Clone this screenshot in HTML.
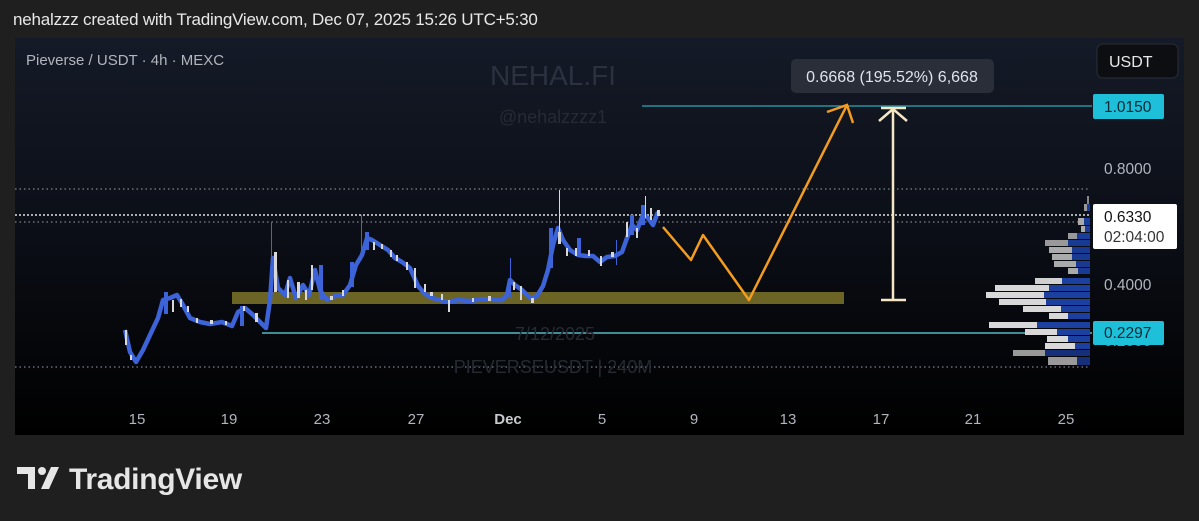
<!DOCTYPE html>
<html><head><meta charset="utf-8"><style>
html,body{margin:0;padding:0;width:1199px;height:521px;background:#1f1f1f;overflow:hidden;font-family:"Liberation Sans",sans-serif}
#hdr{position:absolute;left:13px;top:10px;font-size:17px;color:#e8e8e8;letter-spacing:-0.2px}
#chart{position:absolute;left:15px;top:38px;width:1169px;height:397px;background:linear-gradient(#141a27 0%,#0b0e16 50%,#000 100%)}
svg{position:absolute;left:0;top:0}
</style></head><body>
<div id="hdr">nehalzzz created with TradingView.com, Dec 07, 2025 15:26 UTC+5:30</div>
<div id="chart"></div>
<svg width="1199" height="521" viewBox="0 0 1199 521" font-family="Liberation Sans, sans-serif">
<text x="26" y="65" font-size="15" fill="#b2b5be">Pieverse / USDT · 4h · MEXC</text>
<text x="553" y="85" font-size="28" fill="#2c3140" text-anchor="middle">NEHAL.FI</text>
<text x="553" y="123" font-size="18" fill="#252a36" text-anchor="middle">@nehalzzzz1</text>
<g stroke="#9aa0aa" stroke-dasharray="1.5 3" stroke-width="1">
<line x1="15" y1="189" x2="1090" y2="189"/>
<line x1="15" y1="222" x2="1090" y2="222"/>
<line x1="15" y1="367" x2="1090" y2="367"/>
</g>
<line x1="15" y1="215" x2="1090" y2="215" stroke="#e0e0e0" stroke-dasharray="2 2" stroke-width="1.5"/>
<rect x="232" y="292" width="612" height="12" fill="#6b6425"/>
<line x1="642" y1="106" x2="1092" y2="106" stroke="#27a9bd" stroke-width="1.3"/>
<line x1="262" y1="333" x2="1092" y2="333" stroke="#56b8c4" stroke-width="1.5"/>
<text x="555" y="340" font-size="18" fill="#262a33" text-anchor="middle">7/12/2025</text>
<text x="553" y="373" font-size="18" fill="#262a33" text-anchor="middle">PIEVERSEUSDT | 240M</text>
<polyline fill="none" stroke="#3d63d8" stroke-width="4.5" stroke-linejoin="round" points="125,330 130,352 136,362 143,350 150,335 158,318 163,300 170,298 177,295 183,305 190,318 200,322 210,324 222,322 232,326 238,312 245,308 252,314 260,322 266,328 270,300 273,258 278,288 285,295 290,278 296,298 303,285 309,295 315,270 320,290 327,300 335,296 343,295 350,285 356,265 362,255 367,238 372,240 380,245 388,250 395,258 402,262 410,268 418,286 425,294 432,298 440,300 448,302 458,300 470,301 482,299 495,300 502,300 507,295 510,280 515,285 522,290 530,298 537,296 543,286 548,270 553,245 558,228 563,240 570,250 578,255 586,256 593,256 600,262 607,257 615,256 622,252 627,238 632,225 637,230 643,215 648,218 653,225 658,212"/>
<g fill="#3d63d8">
<rect x="271" y="222" width="1" height="80"/><rect x="164" y="292" width="4" height="22"/><rect x="319" y="265" width="4" height="35"/><rect x="361" y="215" width="1" height="45"/><rect x="365" y="232" width="4" height="18"/><rect x="549" y="228" width="4" height="40"/><rect x="510" y="258" width="1" height="40"/><rect x="616" y="240" width="1" height="25"/><rect x="630" y="215" width="4" height="20"/><rect x="641" y="205" width="4" height="20"/><rect x="240" y="306" width="4" height="20"/><rect x="577" y="238" width="4" height="18"/><rect x="350" y="262" width="4" height="25"/>
</g>
<g fill="#d8d8d8">
<rect x="125" y="330" width="2" height="15"/><rect x="130" y="355" width="2" height="5"/><rect x="172" y="300" width="2" height="12"/><rect x="180" y="299" width="2" height="8"/><rect x="187" y="306" width="2" height="6"/><rect x="196" y="318" width="2" height="5"/><rect x="210" y="320" width="3" height="4"/><rect x="225" y="321" width="2" height="4"/><rect x="243" y="306" width="2" height="5"/><rect x="255" y="313" width="3" height="9"/><rect x="274" y="252" width="3" height="40"/><rect x="287" y="280" width="2" height="18"/><rect x="297" y="282" width="3" height="16"/><rect x="305" y="290" width="2" height="10"/><rect x="311" y="265" width="2" height="25"/><rect x="330" y="296" width="3" height="4"/><rect x="342" y="290" width="2" height="6"/><rect x="373" y="242" width="2" height="8"/><rect x="381" y="244" width="2" height="5"/><rect x="390" y="250" width="2" height="7"/><rect x="396" y="255" width="2" height="6"/><rect x="406" y="262" width="2" height="8"/><rect x="414" y="268" width="2" height="20"/><rect x="424" y="284" width="2" height="8"/><rect x="430" y="292" width="3" height="4"/><rect x="441" y="294" width="2" height="6"/><rect x="448" y="300" width="2" height="12"/><rect x="472" y="298" width="2" height="4"/><rect x="488" y="296" width="3" height="5"/><rect x="513" y="282" width="2" height="8"/><rect x="520" y="286" width="2" height="14"/><rect x="531" y="298" width="3" height="5"/><rect x="559" y="190" width="1" height="45"/><rect x="558" y="232" width="3" height="12"/><rect x="566" y="248" width="2" height="8"/><rect x="575" y="248" width="2" height="8"/><rect x="588" y="250" width="2" height="6"/><rect x="600" y="256" width="2" height="10"/><rect x="611" y="252" width="3" height="5"/><rect x="626" y="222" width="2" height="15"/><rect x="636" y="228" width="2" height="10"/><rect x="645" y="196" width="1" height="22"/><rect x="650" y="208" width="2" height="12"/><rect x="657" y="210" width="3" height="6"/>
</g>
<polyline fill="none" stroke="#f39c1f" stroke-width="2.5" stroke-linejoin="round" points="663,227 691,260 703,235 749,300 847,105"/>
<polyline fill="none" stroke="#f39c1f" stroke-width="2.5" points="827,112 847,105 853,123"/>
<g stroke="#f6e7c4" stroke-width="2.5" fill="none">
<line x1="893" y1="109" x2="893" y2="300"/>
<line x1="881" y1="300" x2="906" y2="300"/>
<line x1="881" y1="108" x2="906" y2="108"/>
<polyline points="879,121 893,109 907,121"/>
</g>
<rect x="791" y="59" width="203" height="34" rx="5" fill="#2a2e39"/>
<text x="892" y="82" font-size="16" fill="#e0e3eb" text-anchor="middle">0.6668 (195.52%) 6,668</text>
<g>
<rect x="1087" y="196" width="2" height="10" fill="#888"/>
<rect x="1084" y="204" width="3" height="7" fill="#999"/><rect x="1087" y="204" width="3" height="7" fill="#1a3d9a"/>
<rect x="1078" y="218" width="6" height="7" fill="#aaa"/><rect x="1084" y="218" width="6" height="7" fill="#1a3d9a"/>
<rect x="1081" y="226" width="4" height="6" fill="#aaa"/><rect x="1085" y="226" width="5" height="6" fill="#1a3d9a"/>
<rect x="1068" y="233" width="9" height="6" fill="#999"/><rect x="1077" y="233" width="13" height="6" fill="#1a3d9a"/>
<rect x="1045" y="240" width="23" height="6" fill="#999"/><rect x="1068" y="240" width="22" height="6" fill="#183a92"/>
<rect x="1049" y="247" width="23" height="6" fill="#aaa"/><rect x="1072" y="247" width="18" height="6" fill="#183a92"/>
<rect x="1052" y="254" width="20" height="6" fill="#aaa"/><rect x="1072" y="254" width="18" height="6" fill="#183a92"/>
<rect x="1054" y="261" width="22" height="6" fill="#aaa"/><rect x="1076" y="261" width="14" height="6" fill="#183a92"/>
<rect x="1068" y="268" width="10" height="6" fill="#aaa"/><rect x="1078" y="268" width="12" height="6" fill="#183a92"/>
<rect x="1035" y="278" width="27" height="6" fill="#d0d0d0"/><rect x="1062" y="278" width="28" height="6" fill="#1c40a0"/>
<rect x="995" y="285" width="54" height="6" fill="#d8d8d8"/><rect x="1049" y="285" width="41" height="6" fill="#1c40a0"/>
<rect x="986" y="292" width="58" height="6" fill="#d8d8d8"/><rect x="1044" y="292" width="46" height="6" fill="#1c40a0"/>
<rect x="999" y="299" width="47" height="6" fill="#d8d8d8"/><rect x="1046" y="299" width="44" height="6" fill="#1c40a0"/>
<rect x="1023" y="306" width="38" height="6" fill="#d8d8d8"/><rect x="1061" y="306" width="29" height="6" fill="#1c40a0"/>
<rect x="1049" y="313" width="19" height="6" fill="#d8d8d8"/><rect x="1068" y="313" width="22" height="6" fill="#1c40a0"/>
<rect x="989" y="322" width="48" height="6" fill="#d8d8d8"/><rect x="1037" y="322" width="53" height="6" fill="#1c40a0"/>
<rect x="1025" y="329" width="32" height="6" fill="#d8d8d8"/><rect x="1057" y="329" width="33" height="6" fill="#1c40a0"/>
<rect x="1047" y="336" width="21" height="6" fill="#d8d8d8"/><rect x="1068" y="336" width="22" height="6" fill="#1c40a0"/>
<rect x="1045" y="343" width="30" height="6" fill="#d8d8d8"/><rect x="1075" y="343" width="15" height="6" fill="#1c40a0"/>
<rect x="1013" y="350" width="32" height="6" fill="#999"/><rect x="1045" y="350" width="45" height="6" fill="#152f7a"/>
<rect x="1048" y="357" width="29" height="8" fill="#999"/><rect x="1077" y="357" width="13" height="8" fill="#152f7a"/>
</g>
<rect x="1097" y="44" width="81" height="34" rx="6" fill="#0d0e12" stroke="#2a2d35"/>
<text x="1109" y="67" font-size="16" fill="#e8e8e8">USDT</text>
<rect x="1093" y="94" width="71" height="25" rx="2" fill="#1ebfd8"/>
<text x="1104" y="112" font-size="15.5" fill="#0c2a36">1.0150</text>
<text x="1104" y="174" font-size="15.5" fill="#b2b5be">0.8000</text>
<rect x="1093" y="204" width="84" height="45" rx="2" fill="#fff"/>
<text x="1104" y="222" font-size="15.5" fill="#111">0.6330</text>
<text x="1104" y="242" font-size="15.5" fill="#333">02:04:00</text>
<text x="1104" y="290" font-size="15.5" fill="#b2b5be">0.4000</text>
<text x="1104" y="346" font-size="15.5" fill="#8a8e98">0.2000</text>
<rect x="1093" y="321" width="71" height="24" rx="2" fill="#1ebfd8"/>
<text x="1104" y="338" font-size="15.5" fill="#0c2a36">0.2297</text>
<g font-size="15" fill="#b2b5be" text-anchor="middle">
<text x="137" y="424">15</text><text x="229" y="424">19</text><text x="322" y="424">23</text><text x="416" y="424">27</text>
<text x="508" y="424" font-weight="bold" fill="#c8cad0">Dec</text><text x="602" y="424">5</text><text x="694" y="424">9</text>
<text x="788" y="424">13</text><text x="881" y="424">17</text><text x="973" y="424">21</text><text x="1066" y="424">25</text>
</g>
<g fill="#e6e6e6">
<path d="M17 467 H35 V489 H28 V474 H17 Z"/>
<circle cx="42" cy="471" r="4"/>
<path d="M51 467 H59 L49 489 H41 Z"/>
</g>
<text x="69" y="489" font-size="30" font-weight="bold" fill="#e6e6e6" letter-spacing="-0.3">TradingView</text>
</svg>
</body></html>
